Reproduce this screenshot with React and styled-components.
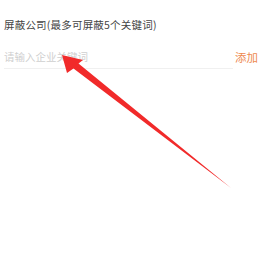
import React from 'react';
import styled, { createGlobalStyle } from 'styled-components';

const Global = createGlobalStyle`
  html, body {
    margin: 0;
    padding: 0;
    background: #fff;
  }
  body {
    font-family: "Noto Sans CJK SC", "Noto Sans", sans-serif;
  }
`;

const Page = styled.div`
  position: relative;
  width: 270px;
  height: 270px;
  overflow: hidden;
  background: #fff;
`;

const Section = styled.div`
  padding: 17px 0 0 4px;
`;

const Title = styled.div`
  font-size: 10.5px;
  line-height: 16px;
  color: #444;
  letter-spacing: 0.2px;
`;

const InputRow = styled.div`
  display: flex;
  align-items: flex-start;
  margin-top: 16px;
`;

const Field = styled.div`
  width: 229px;
  padding-bottom: 3px;
  border-bottom: 1px solid #f0f0f0;
  font-size: 10.5px;
  line-height: 16px;
  color: #cfcfcf;
`;

const AddButton = styled.div`
  margin-left: 2px;
  font-size: 11.5px;
  line-height: 16px;
  color: #ee8a50;
`;

const Arrow = styled.svg`
  position: absolute;
  left: 0;
  top: 0;
  pointer-events: none;
`;

export default function App() {
  return (
    <Page>
      <Global />
      <Section>
        <Title>屏蔽公司(最多可屏蔽5个关键词)</Title>
        <InputRow>
          <Field>请输入企业关键词</Field>
          <AddButton>添加</AddButton>
        </InputRow>
      </Section>
      <Arrow width="270" height="270" viewBox="0 0 270 270">
        <path
          d="M62 55 L83 60 L78.5 63.5 L231 188 L73.5 68.5 L67 73 Z"
          fill="#f12a2a"
        />
      </Arrow>
    </Page>
  );
}
